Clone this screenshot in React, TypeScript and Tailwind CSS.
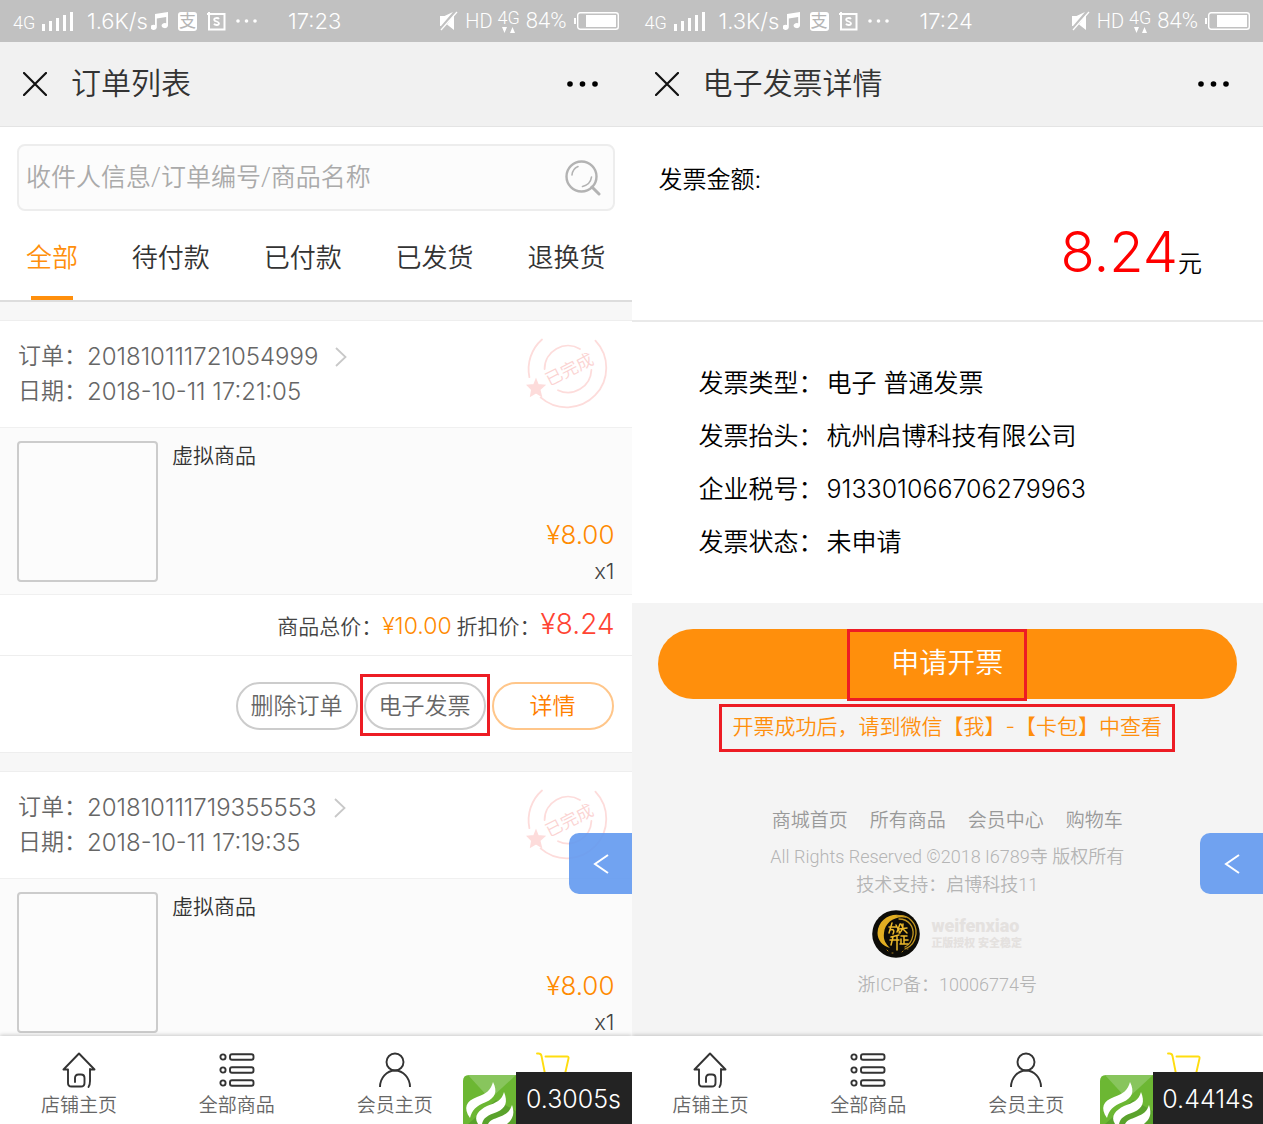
import type { ReactNode } from "react";

type Order = { id: string; date: string; total?: string; discounted?: string };

const orders: Order[] = [
  { id: "201810111721054999", date: "2018-10-11 17:21:05", total: "¥10.00", discounted: "¥8.24" },
  { id: "201810111719355553", date: "2018-10-11 17:19:35" },
];

const tabs = ["全部", "待付款", "已付款", "已发货", "退换货"];

const invoice = [
  { label: "发票类型：", value: "电子 普通发票" },
  { label: "发票抬头：", value: "杭州启博科技有限公司" },
  { label: "企业税号：", value: "913301066706279963" },
  { label: "发票状态：", value: "未申请" },
];

const footerLinks = ["商城首页", "所有商品", "会员中心", "购物车"];

function StatusBar({ speed, time }: { speed: string; time: string }) {
  return (
    <div className="flex h-[42px] shrink-0 items-center whitespace-nowrap bg-[#c1c1c1] pl-[13px] pr-[13px] text-[22px] leading-none text-white">
      <span className="mt-1 w-[29px] text-[18px]">4G</span>
      <svg className="mr-[13px] h-5 w-8" viewBox="0 0 32 20" fill="currentColor">
        <path d="M0 13h3v7H0zM7 10h3v10H7zM14 7h3v13h-3zM21 4h3v16h-3zM28 1h3v19h-3z" />
      </svg>
      <span className="w-[64px] font-[Inter,sans-serif]">{speed}</span>
      <svg className="mr-[10px] h-[18px] w-[17px]" viewBox="0 0 17 18" fill="currentColor">
        <path d="M4 2 17 0v13.500a3.200 2.600 0 1 1-1.800-2.300V5L5.800 6.500v8.700A3.200 2.600 0 1 1 4 13z" />
      </svg>
      <span className="mr-[10px] flex size-[19px] items-center justify-center rounded-[3px] bg-white text-[17px] font-normal text-[#b5b5b5]">支</span>
      <svg className="mr-[10px] size-[19px]" viewBox="0 0 19 19" fill="none" stroke="currentColor" strokeWidth="2">
        <path d="M0 2h17.500v15.500H2V0" />
        <path d="M12 7C11 5.500 7 5.700 7.200 7.800c.2 2 4.800 1.400 4.800 3.500 0 2.200-4 2.200-5 .5" strokeWidth="1.800" />
      </svg>
      <svg className="h-1 w-[22px]" viewBox="0 0 22 4" fill="currentColor">
        <circle cx="2" cy="2" r="1.800" />
        <circle cx="10.500" cy="2" r="1.800" />
        <circle cx="19" cy="2" r="1.800" />
      </svg>
      <span className="ml-[30px] font-[Inter,sans-serif]">{time}</span>
      <svg className="ml-auto mr-[7px] h-5 w-[19px]" viewBox="0 0 19 20" fill="currentColor">
        <path d="M1 5h4.500L14 1 2 15H1zM15 4v15l-7-5.500z" />
        <path d="M18 1 2 19" stroke="currentColor" strokeWidth="1.300" />
      </svg>
      <span className="mr-[5px] text-[20px]">HD</span>
      <span className="mr-[6px] flex flex-col items-center text-[18px]">
        4G
        <svg className="h-1.5 w-[15px]" viewBox="0 0 15 6" fill="currentColor">
          <path d="M1 0h5L3.500 6zM9 6h5L11.500 0z" />
        </svg>
      </span>
      <span className="mr-[7px]">84%</span>
      <svg className="h-[18px] w-[45px]" viewBox="0 0 45 18">
        <rect x="3.700" y=".7" width="40.600" height="16.600" rx="2.500" fill="none" stroke="#fff" strokeWidth="1.400" />
        <path d="M0 6h2v6H0zM12 3h30v12H12z" fill="#fff" />
      </svg>
    </div>
  );
}

function TitleBar({ title }: { title: string }) {
  return (
    <header className="flex h-[85px] shrink-0 items-center border-b border-[#e4e4e4] bg-[#f1f1f1] pl-[23px] pr-[34px]">
      <button type="button" aria-label="关闭" className="mr-[24px]">
        <svg className="size-6" viewBox="0 0 24 24" stroke="#111" strokeWidth="2.200" strokeLinecap="round">
          <path d="M1 1l22 22M23 1L1 23" />
        </svg>
      </button>
      <h1 className="text-[30px] leading-none text-[#333]">{title}</h1>
      <button type="button" aria-label="更多" className="ml-auto">
        <svg className="h-1.5 w-[31px]" viewBox="0 0 31 6">
          <circle cx="3" cy="3" r="2.800" />
          <circle cx="15.500" cy="3" r="2.800" />
          <circle cx="28" cy="3" r="2.800" />
        </svg>
      </button>
    </header>
  );
}

function HomeIcon() {
  return (
    <svg className="size-9" viewBox="0 0 36 36" fill="none" stroke="#333" strokeWidth="1.900" strokeLinecap="round" strokeLinejoin="round">
      <path d="M29 17v12q0 4-1.500 6M29 17.500h4.500L18 1.500 2.500 17.500H7V31q0 3.500 3.500 3.500H20q3.500 0 3.500-3.500v-5q0-3.500-3.500-3.500h-2.500q-3.500 0-3.500 3.500v4" />
    </svg>
  );
}

function ListIcon() {
  return (
    <svg className="size-9" viewBox="0 0 36 36" fill="none" stroke="#333" strokeWidth="1.900">
      <circle cx="4" cy="5" r="2.600" />
      <circle cx="4" cy="18" r="2.600" />
      <circle cx="4" cy="31" r="2.600" />
      <rect x="11" y="2.200" width="23.500" height="5.600" rx="2" />
      <rect x="11" y="15.200" width="23.500" height="5.600" rx="2" />
      <rect x="11" y="28.200" width="23.500" height="5.600" rx="2" />
    </svg>
  );
}

function UserIcon() {
  return (
    <svg className="size-9" viewBox="0 0 36 36" fill="none" stroke="#333" strokeWidth="1.900">
      <circle cx="18" cy="10" r="8.500" />
      <path d="M3 35A15 16.500 0 0 1 33 35" />
    </svg>
  );
}

function CartIcon() {
  return (
    <svg className="size-9" viewBox="0 0 36 36" fill="none" stroke="#ffdd0f" strokeWidth="1.900" strokeLinecap="round" strokeLinejoin="round">
      <path d="M2 1.500h1.500Q6 1.500 6.500 4L11 27h19" />
      <path d="M10.500 4.500h21.500q2 0 1.500 2L30 22" />
    </svg>
  );
}

function BottomNav() {
  const items = [
    { label: "店铺主页", icon: <HomeIcon /> },
    { label: "全部商品", icon: <ListIcon /> },
    { label: "会员主页", icon: <UserIcon /> },
  ];
  return (
    <nav className="relative grid h-22 shrink-0 grid-cols-4 bg-white shadow-[0_-1px_4px_rgba(0,0,0,0.2)]">
      {items.map((item) => (
        <a key={item.label} href="#" className="flex flex-col items-center gap-[6px] pt-4 text-[19px] leading-6 text-[#666]">
          {item.icon}
          {item.label}
        </a>
      ))}
      <a href="#" aria-label="购物车" className="flex justify-center pt-4">
        <CartIcon />
      </a>
    </nav>
  );
}

function TraceBadge({ time, width }: { time: string; width: string }) {
  return (
    <div className="absolute bottom-0 right-0 flex items-end">
      <svg className="h-[49px] w-[53px]" viewBox="0 0 53 49">
        <path d="M0 6Q0 0 6 0h47v49H0z" fill="#6cb733" />
        <path d="M5 0h48L27 24z" fill="#88c55d" />
        <path d="M5 49 33 25 53 36v13z" fill="#5aa22c" />
        <g fill="#fff">
          <path d="M30 7c5 10 2 16-7 20C13 31 9 35 7 43 0 33 3 26 14 22c9-3 14-7 16-15z" />
          <path d="M41 17c4 10 2 16-7 20-9 3-14 6-15 12h-4c-5-8 1-14 9-18 9-3 15-6 17-14z" />
          <path d="M49 30c3 9 1 14-5 19H25c2-4 6-5 11-7 8-3 11-6 13-12z" />
        </g>
      </svg>
      <div className={`${width} h-[52px] bg-[#232323] text-center font-[Inter,sans-serif] text-[25px] leading-[54px] text-white`}>{time}</div>
    </div>
  );
}

function Phone({ title, speed, time, trace, traceWidth, children }: { title: string; speed: string; time: string; trace: string; traceWidth: string; children: ReactNode }) {
  return (
    <section className="relative flex h-screen min-w-0 flex-col overflow-hidden">
      <StatusBar speed={speed} time={time} />
      <TitleBar title={title} />
      <main className="min-h-0 flex-1 overflow-hidden">{children}</main>
      <BottomNav />
      <button type="button" aria-label="展开" className="absolute bottom-[230px] right-0 flex h-[61px] w-[63px] items-center rounded-l-[10px] bg-[#6299ef]/90 pl-6">
        <svg className="h-5 w-4" viewBox="0 0 16 20" fill="none" stroke="#fff" strokeWidth="2">
          <path d="M15 1 2 10l13 9" />
        </svg>
      </button>
      <TraceBadge time={trace} width={traceWidth} />
    </section>
  );
}

function DoneStamp() {
  return (
    <svg className="size-[84px]" viewBox="-42 -42 84 84" fill="none" stroke="#fddcdb" strokeWidth="1.800" strokeLinecap="round">
      <path d="M-26-29.500A39.500 39.500 0 0 0-38.600 8.200" />
      <path d="M-27.400 28.400A39.500 39.500 0 0 0 27.400-28.400" />
      <path d="M-23.400 0A23.400 23.400 0 0 1 12-20" />
      <path d="M23.400 1A23.400 23.400 0 0 1-10 21.200" />
      <path d="M-32 11l2 5 6 .5-4.500 4 1.500 6-5-3-5 3 1-6-4-4 6-.5z" fill="#fddcdb" />
      <text transform="rotate(-27)" textAnchor="middle" x="1" y="7" fontSize="17" fill="#fbd3d2" stroke="none">已完成</text>
    </svg>
  );
}

function OrderCard({ order, marked }: { order: Order; marked: boolean }) {
  return (
    <article className="mt-[18px] border-y border-[#eee] bg-white font-[Inter,'Noto_Sans_CJK_SC',sans-serif]">
      <div className="flex justify-between border-b border-[#f0f0f0] pb-[18px] pl-[18px] pr-[22px] pt-[18px] text-[23px] leading-[35px] text-[#666]">
        <div>
          <a href="#" className="flex items-center">
            订单：<span className="text-[24px]">{order.id}</span>
            <svg className="ml-[17px] h-5 w-3" viewBox="0 0 12 20" fill="none" stroke="#c8c8c8" strokeWidth="1.800">
              <path d="M1 1l9.500 9L1 19" />
            </svg>
          </a>
          <p className="flex items-center">
            日期：<span className="text-[24px]">{order.date}</span>
          </p>
        </div>
        <div className="-mb-4 -mt-3">
          <DoneStamp />
        </div>
      </div>
      <div className="flex items-start border-b border-[#f0f0f0] bg-[#fbfbfb] px-[17px] pb-[5px] pt-[13px]">
        <div className="size-[141px] shrink-0 rounded-[4px] border-2 border-[#ccc] bg-[#fcfcfc]" />
        <div className="flex-1 pl-[14px]">
          <h2 className="text-[21px] leading-[30px] text-[#333]">虚拟商品</h2>
          <p className="mt-[46px] text-right text-[26px] leading-9 text-[#ff8a00]">¥8.00</p>
          <p className="text-right text-[22px] leading-9 text-[#444]">x1</p>
        </div>
      </div>
      {order.total && (
        <>
          <p className="flex h-[61px] items-baseline justify-end border-b border-[#eee] px-[17px] pt-0.5 text-[21px] leading-[60px] text-[#444]">
            商品总价：<span className="mr-[5px] text-[23px] leading-none text-[#ff8a00]">{order.total}</span>折扣价：<span className="text-[28px] leading-none text-[#ff4433]">{order.discounted}</span>
          </p>
          <div className="flex justify-end gap-[6px] pb-[22px] pr-[18px] pt-[26px] text-[23px] text-[#666]">
            <button type="button" className="h-12 w-[122px] rounded-full border-2 border-[#ccc] leading-none">删除订单</button>
            <div className="relative">
              <button type="button" className="h-12 w-[122px] rounded-full border-2 border-[#ccc] leading-none">电子发票</button>
              {marked && <div className="pointer-events-none absolute -inset-x-1 -bottom-1.5 -top-2 border-3 border-[#ed1c24]" />}
            </div>
            <button type="button" className="h-12 w-[122px] rounded-full border-2 border-[#ffc68a] leading-none text-[#ff8000]">详情</button>
          </div>
        </>
      )}
    </article>
  );
}

function OrderList() {
  return (
    <div className="bg-[#f7f7f7]">
      <div className="bg-white pt-[17px]">
        <label className="mx-[17px] flex h-[67px] items-center rounded-[8px] border-2 border-[#ededed] bg-[#fcfcfc] pl-[7px] pr-[12px]">
          <input aria-label="搜索订单" className="min-w-0 flex-1 text-[25px] outline-none placeholder:text-[#aaa]" placeholder="收件人信息/订单编号/商品名称" />
          <svg className="size-9" viewBox="0 0 36 36" fill="none" stroke="#b3b3b3" strokeWidth="2.400" strokeLinecap="round">
            <circle cx="16.500" cy="16.500" r="15" />
            <path d="M27 27l7 7" strokeWidth="3" />
            <path d="M7 15q.5-6 6-8.500M26.500 17q-1 7.500-9 9.500" strokeWidth="1.600" />
          </svg>
        </label>
        <div className="flex h-[91px] justify-between border-b-2 border-[#ddd] px-[26px] text-[26px] leading-[94px] text-[#333]">
          {tabs.map((tab, i) => (
            <a key={tab} href="#" className={i === 0 ? "relative h-[89px] text-[#ff8f0c]" : "h-[89px]"}>
              {tab}
              {i === 0 && <span className="absolute inset-x-[5px] bottom-0 h-1 bg-[#ff8f0c]" />}
            </a>
          ))}
        </div>
      </div>
      {orders.map((order, i) => (
        <OrderCard key={order.id} order={order} marked={i === 0} />
      ))}
    </div>
  );
}

function SealLogo() {
  return (
    <svg className="size-12" viewBox="0 0 48 48" fill="none" strokeLinecap="round">
      <circle cx="24" cy="24" r="23.800" fill="#0d0c08" />
      <path d="M35 8C23 0 6 8 5.500 23c0 7 5 13 12.500 15-4-4-7-8-6-15C13 12 24 5 35 8z" fill="#e2ae22" />
      <path d="M25 6c12-2 20 8 19 18-1 8-5 13-11 15M27 9c10 0 15 8 14 16-1 6-4 10-8 12" stroke="#c39620" strokeWidth="1.300" />
      <g stroke="#ecb92b" strokeWidth="1.500">
        <path d="M17 17h8M20 13l-3 10M18 20c3-1 5 0 3 4M24 15l4 8M28 14l-3 8M29 14l2 4M27 19l8-1M31 14c0 5-2 8-4 9M31 19l4 4" />
        <path d="M19 27l8-2M18 30h9M21 27l-2 8M25 26v14M29 26h6M32 26v7M29 29v5M28 34h8M32 30h4" />
      </g>
      <path d="M15 40l1 1M20 43h1M30 42l1-1M35 39h1" stroke="#a77d1b" />
    </svg>
  );
}

function InvoiceDetail() {
  return (
    <div className="min-h-full bg-[#f4f4f4]">
      <div className="bg-white pb-[34px] font-[Inter,'Noto_Sans_CJK_SC',sans-serif] text-black">
        <div className="mb-[35px] border-b-2 border-[#e9e9e9] pb-[26px] pl-[27px] pr-[61px] pt-[35px] text-[24px]">
          <p className="leading-9">发票金额:</p>
          <p className="mt-[14px] mb-0.5 flex h-20 items-baseline justify-end leading-none">
            <span className="text-[56px] leading-20 text-[#f00]">8.24</span>元
          </p>
        </div>
        <dl className="pl-[67px] text-[25px] leading-[53px]">
          {invoice.map((row) => (
            <div key={row.label} className="flex">
              <dt className="w-[128px]">{row.label}</dt>
              <dd>{row.value}</dd>
            </div>
          ))}
        </dl>
      </div>
      <div className="px-[26px] pt-[26px] text-center">
        <button type="button" className="relative block h-[70px] w-full rounded-full bg-[#ff8f0c] text-[28px] text-white">
          申请开票
          <span className="pointer-events-none absolute inset-x-0 -bottom-0.5 top-0 mx-auto w-[180px] -translate-x-[10px] border-3 border-[#ed1c24]" />
        </button>
        <p className="mt-[5px] inline-block h-12 border-3 border-[#ed1c24] px-[10px] font-[Inter,'Noto_Sans_CJK_SC',sans-serif] text-[21px] leading-10 text-[#ff8f0c]">开票成功后，请到微信【我】-【卡包】中查看</p>
      </div>
      <footer className="flex flex-col items-center pt-[55px] text-[18px] leading-7 text-[#b5b5b5]">
        <div className="mb-2 flex gap-[22px] text-[19px] text-[#999]">
          {footerLinks.map((link) => (
            <a key={link} href="#">{link}</a>
          ))}
        </div>
        <p>All Rights Reserved ©2018 I6789寺 版权所有</p>
        <p>技术支持：启博科技11</p>
        <div className="mb-[13px] mt-[11px] flex items-center gap-[11px] text-[#e4e1df]">
          <SealLogo />
          <div className="font-black">
            <p className="text-[18px] leading-5">weifenxiao</p>
            <p className="text-[11px] leading-4">正版授权 安全稳定</p>
          </div>
        </div>
        <p>浙ICP备：10006774号</p>
      </footer>
    </div>
  );
}

export default function App() {
  return (
    <div className="grid grid-cols-2 bg-[#f4f4f4] font-[Roboto,'Noto_Sans_CJK_SC',sans-serif] font-[350]">
      <Phone title="订单列表" speed="1.6K/s" time="17:23" trace="0.3005s" traceWidth="w-[116px]">
        <OrderList />
      </Phone>
      <Phone title="电子发票详情" speed="1.3K/s" time="17:24" trace="0.4414s" traceWidth="w-[110px]">
        <InvoiceDetail />
      </Phone>
    </div>
  );
}
